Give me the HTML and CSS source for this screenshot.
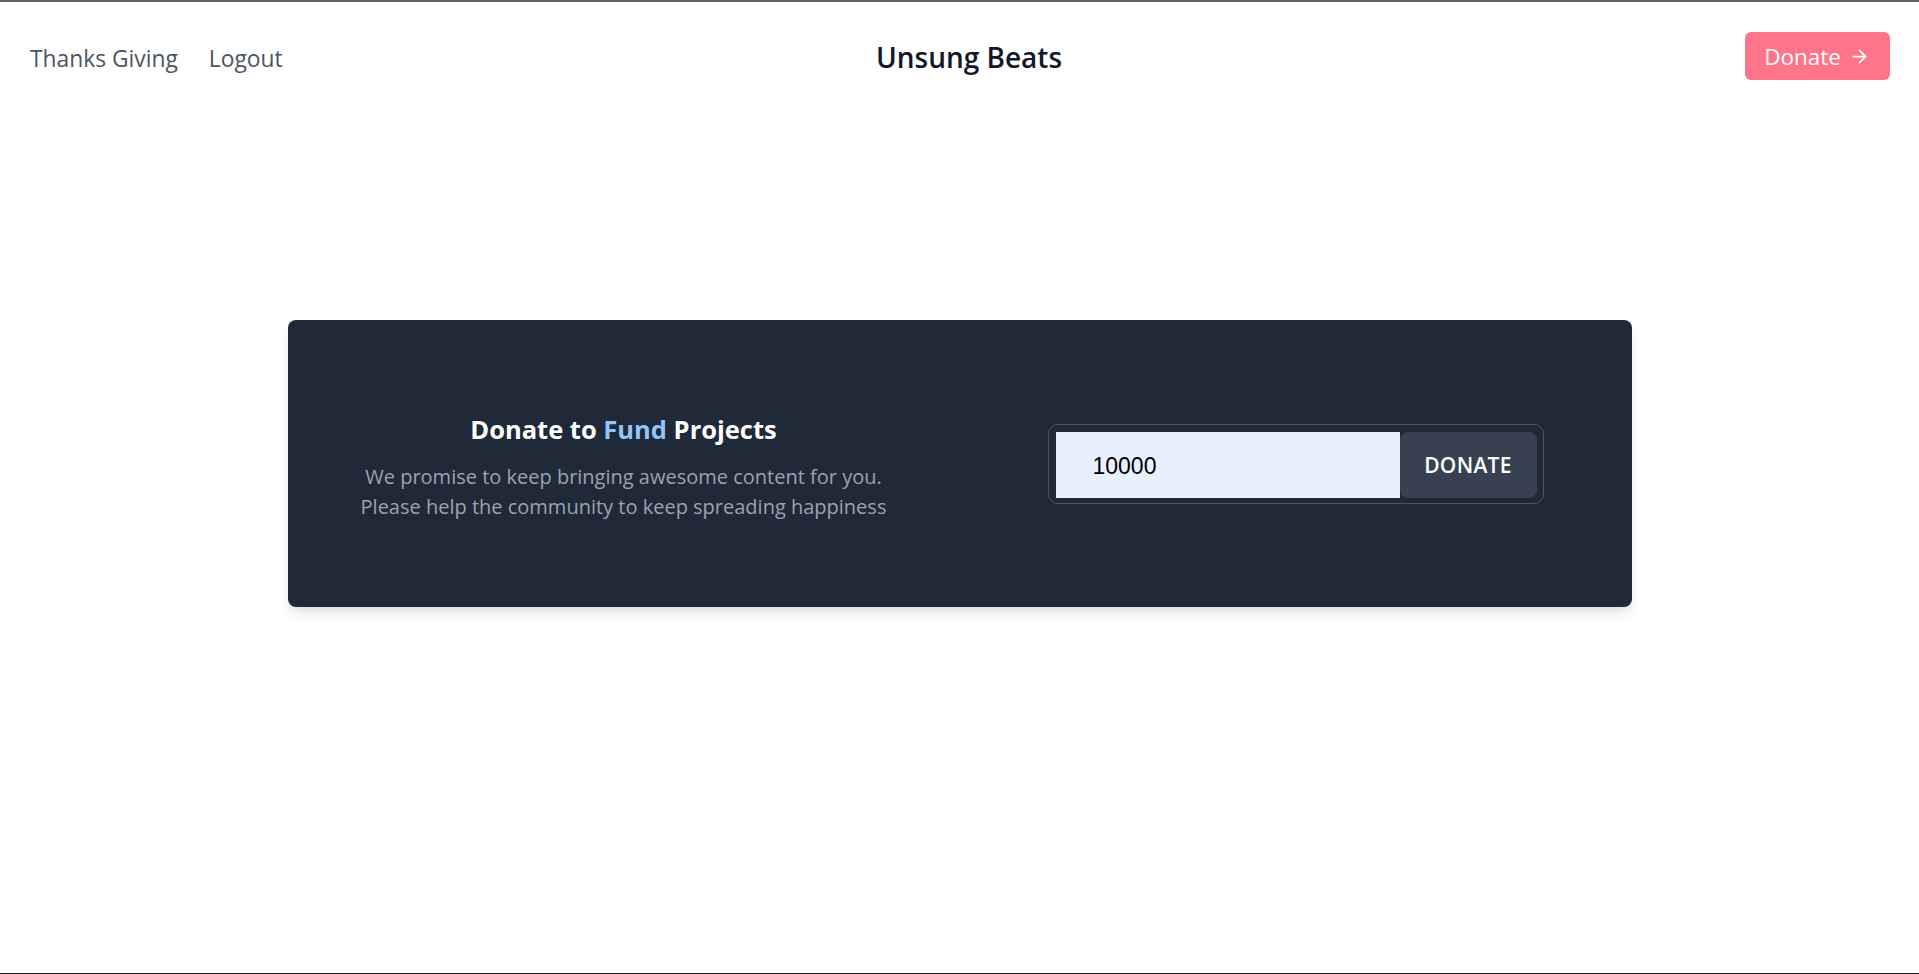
FILE: index.html
```html
<!DOCTYPE html>
<html lang="en">
<head>
<meta charset="utf-8">
<title>Unsung Beats</title>
<link rel="stylesheet" href="styles.css">
</head>
<body>
<div class="page">
  <header class="header">
    <nav class="nav">
      <a class="nav-link" href="#">Thanks Giving</a>
      <a class="nav-link" href="#">Logout</a>
    </nav>
    <div class="brand"><span class="brand-name">Unsung Beats</span></div>
    <div class="actions">
      <button class="donate-btn" type="button">Donate
        <svg class="arrow" viewBox="0 0 24 24" width="21" height="21" fill="none" stroke="currentColor" stroke-width="2" stroke-linecap="round" stroke-linejoin="round"><path d="M5 12h14M12 5l7 7-7 7"/></svg>
      </button>
    </div>
  </header>
  <main class="main">
    <section class="card">
      <div class="card-col text-col">
        <h2 class="card-title">Donate to <span class="fund">Fund</span> Projects</h2>
        <p class="card-text">We promise to keep bringing awesome content for you.<br>Please help the community to keep spreading happiness</p>
      </div>
      <div class="card-col form-col">
        <form class="donate-form" onsubmit="return false">
          <input class="amount" type="text" value="10000">
          <button class="submit" type="submit">DONATE</button>
        </form>
      </div>
    </section>
  </main>
</div>
</body>
</html>
```

FILE: styles.css
```css
* { box-sizing: border-box; }
html, body { margin: 0; padding: 0; background: #ffffff; }
body { font-family: "Open Sans", "Noto Sans", sans-serif; }

.page {
  height: 974px;
  border-top: 2px solid #636363;
  border-bottom: 1px solid #222222;
  overflow: hidden;
}

.header {
  display: grid;
  grid-template-columns: 2fr 1fr 2fr;
  align-items: center;
  padding: 30px 29px 0 30px;
}

.nav { display: flex; align-items: center; gap: 31px; padding-top: 5px; }
.nav-link {
  color: #4b5563;
  text-decoration: none;
  font-size: 22.8px;
  line-height: 32px;
}

.brand { display: flex; justify-content: center; padding-top: 2px; }
.brand-name {
  margin-left: 18px;
  color: #111827;
  font-size: 28px;
  font-weight: 600;
  line-height: 36px;
}

.actions { display: flex; justify-content: flex-end; }
.donate-btn {
  display: inline-flex;
  align-items: center;
  gap: 8px;
  height: 48px;
  padding: 0 20px 0 19px;
  background: #fe7489;
  color: #ffffff;
  border: none;
  border-radius: 6px;
  font-family: inherit;
  font-size: 22.5px;
}
.arrow { display: block; }

.main { padding-top: 240px; }

.card {
  width: 1344px;
  height: 287px;
  margin: 0 auto;
  display: grid;
  grid-template-columns: 1fr 1fr;
  align-items: center;
  background: #1f2937;
  border-radius: 8px;
  box-shadow: 0 10px 15px -3px rgba(0,0,0,0.10), 0 4px 6px -2px rgba(0,0,0,0.05);
}

.text-col { text-align: center; padding-top: 6px; }
.card-title {
  margin: 0 0 16px;
  color: #ffffff;
  font-size: 25.5px;
  font-weight: 700;
  line-height: 34px;
}
.fund { color: #93c5fd; }
.card-text {
  margin: 0;
  color: #9ca3af;
  font-size: 20px;
  line-height: 30px;
}

.form-col { display: flex; justify-content: center; }
.donate-form {
  display: flex;
  width: 496px;
  height: 80px;
  padding: 7px 6px 7px 7px;
  border: 1px solid #4b5563;
  border-radius: 10px;
}
.amount {
  width: 344px;
  height: 66px;
  border: none;
  outline: none;
  background: #e8f0fe;
  padding: 3px 0 0 37px;
  font-family: "Liberation Sans", Arial, sans-serif;
  font-size: 23px;
  color: #000000;
}
.submit {
  flex: 1;
  height: 66px;
  border: none;
  border-radius: 8px;
  background: #374151;
  color: #ffffff;
  font-family: inherit;
  font-size: 21px;
  font-weight: 600;
  letter-spacing: 0.3px;
}
```
